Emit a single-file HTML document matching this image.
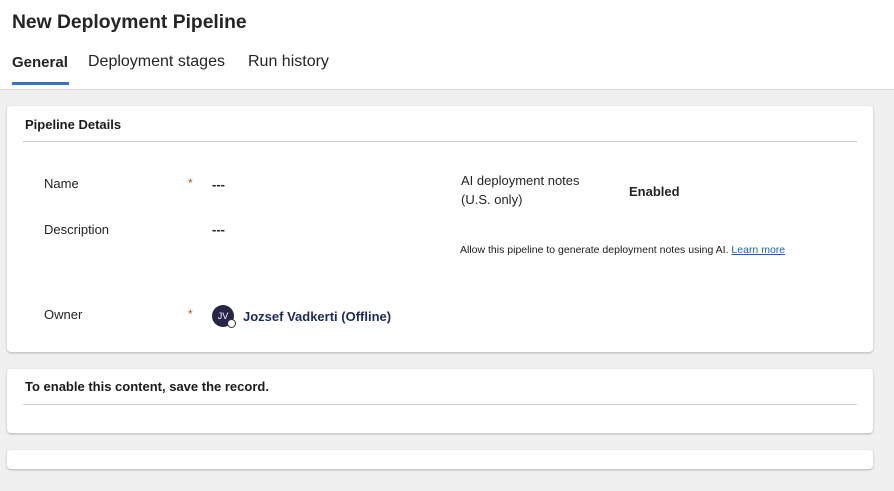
<!DOCTYPE html>
<html><head><style>
*{margin:0;padding:0;box-sizing:border-box}
body{width:894px;height:491px;background:#f0f0f0;font-family:"Liberation Sans",sans-serif;color:#1a1a1a;position:relative;overflow:hidden}
.hdr{position:absolute;left:0;top:0;width:894px;height:90px;background:#fff;border-bottom:1px solid #d6d6d6}
.t{position:absolute;left:12px;top:12px;font-size:19.3px;font-weight:bold;color:#242424}
.tab{position:absolute;top:53px;font-size:16px;color:#242424}
.card{position:absolute;left:7px;width:866px;background:#fff;border-radius:4px;box-shadow:0 1px 2px rgba(0,0,0,.25)}
.abs{position:absolute}
.lbl{font-size:13px;color:#242424}
.star{color:#c0551a;font-size:12px}
</style></head><body>
<div class="hdr">
<div class="t">New Deployment Pipeline</div>
<div class="tab" style="left:12px;font-weight:bold;font-size:15px;top:54px">General</div>
<div class="abs" style="left:12px;top:82px;width:57px;height:3px;background:#3a72c8"></div>
<div class="tab" style="left:88px">Deployment stages</div>
<div class="tab" style="left:248px">Run history</div>
</div>
<div class="card" style="top:106px;height:246px">
<div class="abs" style="left:18px;top:11px;font-size:13px;font-weight:bold">Pipeline Details</div>
<div class="abs" style="left:16px;top:35px;width:834px;height:1px;background:#ccc"></div>
<div class="abs lbl" style="left:37px;top:70px">Name</div>
<div class="abs star" style="left:181px;top:70px">*</div>
<div class="abs lbl" style="left:205px;top:71px;font-weight:bold">---</div>
<div class="abs lbl" style="left:37px;top:116px">Description</div>
<div class="abs lbl" style="left:205px;top:116px;font-weight:bold">---</div>
<div class="abs lbl" style="left:37px;top:201px">Owner</div>
<div class="abs star" style="left:181px;top:201px">*</div>
<div class="abs" style="left:205px;top:199px;width:22px;height:22px;border-radius:50%;background:#262449;color:#fff;font-size:9px;line-height:22px;text-align:center">JV</div>
<div class="abs" style="left:220px;top:213px;width:9px;height:9px;border-radius:50%;background:#fff;border:1.5px solid #333"></div>
<div class="abs lbl" style="left:236px;top:203px;font-weight:bold;color:#1b2a5a">Jozsef Vadkerti (Offline)</div>
<div class="abs lbl" style="left:454px;top:65px;line-height:19px">AI deployment notes<br>(U.S. only)</div>
<div class="abs lbl" style="left:622px;top:78px;font-weight:bold">Enabled</div>
<div class="abs" style="left:453px;top:138px;font-size:10.5px">Allow this pipeline to generate deployment notes using AI. <span style="color:#1f5fb5;text-decoration:underline">Learn more</span></div>
</div>
<div class="card" style="top:369px;height:64px">
<div class="abs" style="left:18px;top:10px;font-size:13px;font-weight:bold">To enable this content, save the record.</div>
<div class="abs" style="left:16px;top:35px;width:834px;height:1px;background:#ccc"></div>
</div>
<div class="card" style="top:450px;height:19px"></div>
</body></html>
